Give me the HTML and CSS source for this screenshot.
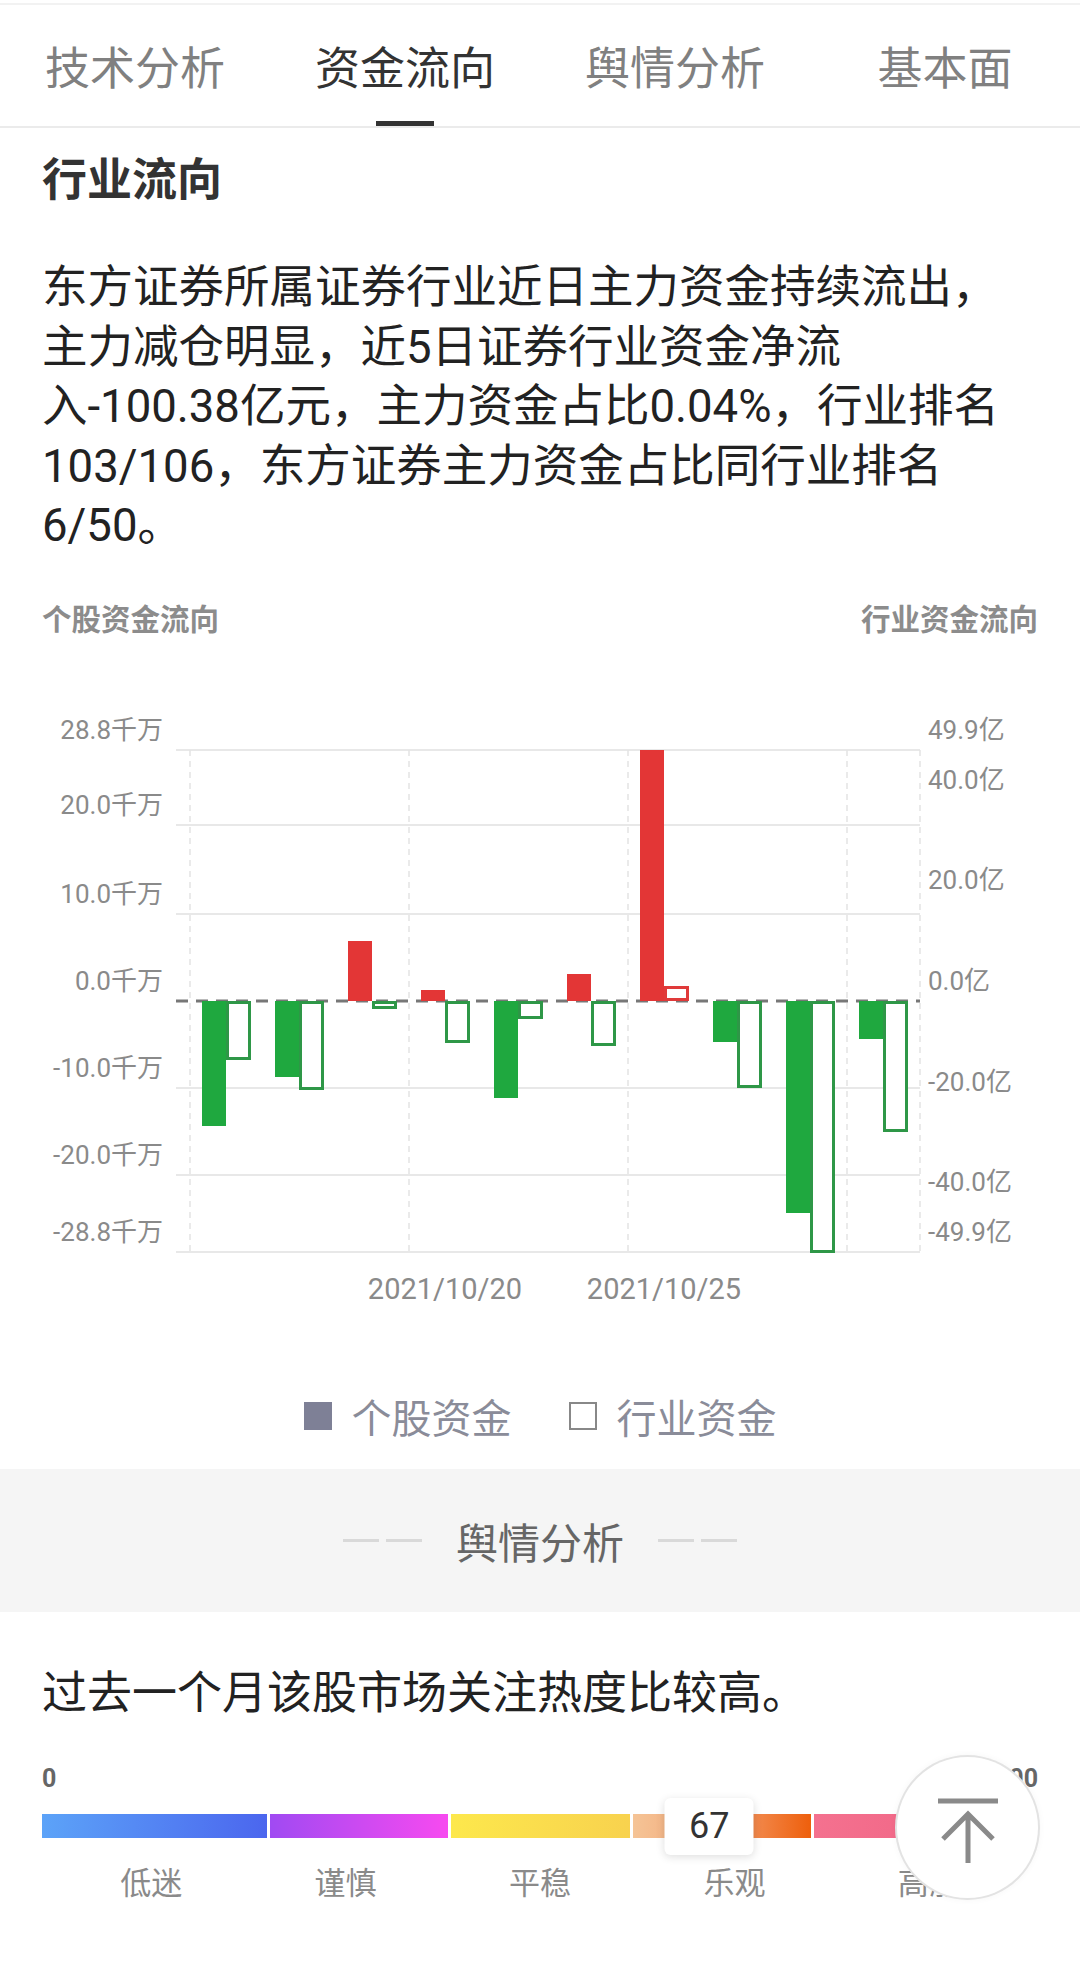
FILE: index.html
```html
<!DOCTYPE html>
<html lang="zh-CN">

<head>
    <meta charset="UTF-8">
    <meta name="viewport" content="width=device-width, initial-scale=1.0">
    <title>资金流向</title>
    <link rel="stylesheet" href="styles.css">
</head>

<body>
    <nav class="tabs">
        <div class="tab">技术分析</div>
        <div class="tab active">资金流向</div>
        <div class="tab">舆情分析</div>
        <div class="tab">基本面</div>
    </nav>

    <section class="industry">
        <h2>行业流向</h2>
        <p class="summary">东方证券所属证券行业近日主力资金持续流出，主力减仓明显，近5日证券行业资金净流入-100.38亿元，主力资金占比0.04%，行业排名103/106，东方证券主力资金占比同行业排名6/50。</p>
        <div class="flow-labels">
            <span>个股资金流向</span>
            <span>行业资金流向</span>
        </div>
    </section>

    <div class="chart">
        <svg width="1080" height="680" viewBox="0 0 1080 680">
            <!-- grid -->
            <g class="grid">
                <line x1="176" y1="110" x2="920" y2="110" />
                <line x1="176" y1="185" x2="920" y2="185" />
                <line x1="176" y1="274" x2="920" y2="274" />
                <line x1="176" y1="448" x2="920" y2="448" />
                <line x1="176" y1="535" x2="920" y2="535" />
                <line x1="176" y1="612" x2="920" y2="612" />
                <line class="v" x1="190" y1="110" x2="190" y2="612" />
                <line class="v" x1="409" y1="110" x2="409" y2="612" />
                <line class="v" x1="628" y1="110" x2="628" y2="612" />
                <line class="v" x1="847" y1="110" x2="847" y2="612" />
                <line class="v" x1="920" y1="110" x2="920" y2="612" />
            </g>
            <line class="zero" x1="176" y1="361" x2="920" y2="361" />

            <!-- stock (filled) and industry (hollow) bars -->
            <rect class="bar-down" x="202" y="361" width="24" height="125" />
            <rect class="box-down" x="227.5" y="362.5" width="22" height="56" />

            <rect class="bar-down" x="275" y="361" width="24" height="76" />
            <rect class="box-down" x="300.5" y="362.5" width="22" height="86" />

            <rect class="bar-up" x="348" y="301" width="24" height="60" />
            <rect class="box-down" x="373.5" y="362.5" width="22" height="5" />

            <rect class="bar-up" x="421" y="350" width="24" height="11" />
            <rect class="box-down" x="446.5" y="362.5" width="22" height="39" />

            <rect class="bar-down" x="494" y="361" width="24" height="97" />
            <rect class="box-down" x="519.5" y="362.5" width="22" height="15" />

            <rect class="bar-up" x="567" y="334" width="24" height="27" />
            <rect class="box-down" x="592.5" y="362.5" width="22" height="42" />

            <rect class="bar-up" x="640" y="110" width="24" height="251" />
            <rect class="box-up" x="665.5" y="347.5" width="22" height="12" />

            <rect class="bar-down" x="713" y="361" width="24" height="41" />
            <rect class="box-down" x="738.5" y="362.5" width="22" height="84" />

            <rect class="bar-down" x="786" y="361" width="24" height="212" />
            <rect class="box-down" x="811.5" y="362.5" width="22" height="249" />

            <rect class="bar-down" x="859" y="361" width="24" height="38" />
            <rect class="box-down" x="884.5" y="362.5" width="22" height="128" />

            <!-- axis labels -->
            <g class="axis-l">
                <text x="163" y="99">28.8千万</text>
                <text x="163" y="174">20.0千万</text>
                <text x="163" y="263">10.0千万</text>
                <text x="163" y="350">0.0千万</text>
                <text x="163" y="437">-10.0千万</text>
                <text x="163" y="524">-20.0千万</text>
                <text x="163" y="601">-28.8千万</text>
            </g>
            <g class="axis-r">
                <text x="928" y="99">49.9亿</text>
                <text x="928" y="149">40.0亿</text>
                <text x="928" y="249">20.0亿</text>
                <text x="928" y="350">0.0亿</text>
                <text x="928" y="451">-20.0亿</text>
                <text x="928" y="551">-40.0亿</text>
                <text x="928" y="601">-49.9亿</text>
            </g>
            <g class="axis-x">
                <text x="445" y="659">2021/10/20</text>
                <text x="664" y="659">2021/10/25</text>
            </g>
        </svg>
    </div>

    <div class="legend">
        <div class="legend-item"><span class="swatch"></span>个股资金</div>
        <div class="legend-item"><span class="swatch hollow"></span>行业资金</div>
    </div>

    <div class="sentiment-head">
        <span class="dash"></span>
        <span>舆情分析</span>
        <span class="dash"></span>
    </div>

    <section class="sentiment">
        <p>过去一个月该股市场关注热度比较高。</p>
        <div class="scale-ends">
            <span>0</span>
            <span>100</span>
        </div>
        <div class="heat">
            <div class="heat-bar">
                <span class="seg seg-1"></span>
                <span class="seg seg-2"></span>
                <span class="seg seg-3"></span>
                <span class="seg seg-4"></span>
                <span class="seg seg-5"></span>
            </div>
            <div class="heat-mark" style="left: 67%;">67</div>
        </div>
        <div class="heat-labels">
            <span>低迷</span>
            <span>谨慎</span>
            <span>平稳</span>
            <span>乐观</span>
            <span>高涨</span>
        </div>
    </section>

    <div class="to-top">
        <svg width="141" height="141" viewBox="0 0 141 141">
            <line x1="41" y1="44" x2="101" y2="44" />
            <path d="M71 58 V106 M46 82 L71 57 L96 82" />
        </svg>
    </div>
</body>

</html>
```

FILE: styles.css
```css
body {
    margin: 0;
    background-color: #fff;
    color: #222;
    font-family: Roboto, "Noto Sans CJK SC", sans-serif;
}

/* tabs */
.tabs {
    display: flex;
    height: 121px;
    margin-top: 3px;
    border-top: 2px solid #f2f2f2;
    border-bottom: 2px solid #ebebeb;
}

.tab {
    flex: 1;
    position: relative;
    display: flex;
    align-items: center;
    justify-content: center;
    font-size: 45px;
    color: #808080;
}

.tab.active {
    color: #333;
}

.tab.active::after {
    content: '';
    position: absolute;
    bottom: 0;
    left: 50%;
    width: 58px;
    height: 5px;
    margin-left: -29px;
    background-color: #333;
}

/* industry flow */
.industry {
    padding: 0 42px;
}

.industry h2 {
    margin: 22px 0 0;
    font-size: 45px;
    line-height: 62px;
    font-weight: 700;
    color: #333;
}

.summary {
    max-width: 985px;
    margin: 46px 0 0;
    font-size: 45.5px;
    line-height: 59.5px;
    color: #222;
}

.flow-labels {
    display: flex;
    justify-content: space-between;
    margin-top: 44px;
    font-size: 29.5px;
    line-height: 40px;
    font-weight: 700;
    color: #8c8c8c;
}

.chart svg {
    display: block;
}

.grid line {
    stroke: #e8e8e8;
    stroke-width: 2;
}

.grid .v {
    stroke: #e4e4e4;
    stroke-width: 1.5;
    stroke-dasharray: 6 5;
}

.zero {
    stroke: #777;
    stroke-width: 3;
    stroke-dasharray: 12 8;
}

.bar-up {
    fill: #e33636;
}

.bar-down {
    fill: #1fa83f;
}

.box-up,
.box-down {
    fill: #fff;
    stroke-width: 3;
}

.box-up {
    stroke: #e03a3a;
}

.box-down {
    stroke: #2e9747;
}

.axis-l,
.axis-r {
    font-size: 26px;
    fill: #8a8a8a;
}

.axis-l {
    text-anchor: end;
}

.axis-x {
    font-size: 29px;
    fill: #8a8a8a;
    text-anchor: middle;
}

/* legend */
.legend {
    display: flex;
    justify-content: center;
    align-items: center;
    gap: 57px;
    height: 56px;
    margin-top: 68px;
    font-size: 40px;
    color: #8a8c99;
}

.legend-item {
    display: flex;
    align-items: center;
    gap: 20px;
}

.swatch {
    width: 28px;
    height: 28px;
    background-color: #7e8096;
}

.swatch.hollow {
    box-sizing: border-box;
    background-color: #fff;
    border: 2px solid #888;
}

/* sentiment */
.sentiment-head {
    display: flex;
    justify-content: center;
    align-items: center;
    gap: 34px;
    height: 143px;
    margin-top: 25px;
    background-color: #f5f5f5;
    font-size: 42px;
    color: #666;
}

.dash {
    width: 79px;
    height: 3px;
    background: linear-gradient(to right, #d9d9d9 36px, transparent 36px, transparent 43px, #d9d9d9 43px);
}

.sentiment {
    padding: 0 42px;
}

.sentiment p {
    margin: 52px 0 0;
    font-size: 45px;
    line-height: 60px;
    color: #222;
}

.scale-ends {
    display: flex;
    justify-content: space-between;
    margin-top: 38px;
    font-size: 25px;
    line-height: 34px;
    font-weight: 700;
    color: #666;
}

.heat {
    position: relative;
    margin-top: 18px;
}

.heat-bar {
    display: flex;
    gap: 3px;
    height: 24px;
}

.seg-1 {
    flex: 225;
    background: linear-gradient(to right, #5ca3f8, #4b66ee);
}

.seg-2 {
    flex: 178;
    background: linear-gradient(to right, #a04af2, #f74af0);
}

.seg-3 {
    flex: 179;
    background: linear-gradient(to right, #fde84c, #f8d24e);
}

.seg-4 {
    flex: 178;
    background: linear-gradient(to right, #f5c496, #f4a070 50%, #ee5f0c);
}

.seg-5 {
    flex: 224;
    background: linear-gradient(to right, #f4718f, #ef5f80);
}

.heat-mark {
    position: absolute;
    top: -16px;
    transform: translateX(-50%);
    display: flex;
    align-items: center;
    justify-content: center;
    width: 89px;
    height: 57px;
    background-color: #fff;
    border-radius: 6px;
    box-shadow: 0 2px 8px rgba(0, 0, 0, 0.13);
    font-size: 36px;
    color: #333;
}

.heat-labels {
    display: grid;
    grid-template-columns: repeat(5, 1fr);
    padding: 0 12px;
    margin-top: 24px;
    font-size: 31px;
    line-height: 44px;
    text-align: center;
    color: #8a8a8a;
}

/* back to top */
.to-top {
    position: fixed;
    right: 42px;
    bottom: 63px;
    width: 141px;
    height: 141px;
    border-radius: 50%;
    background-color: #fff;
    box-shadow: 0 0 0 2px #e3e3e3, 0 0 8px rgba(0, 0, 0, 0.06);
}

.to-top svg {
    display: block;
}

.to-top line,
.to-top path {
    fill: none;
    stroke: #8a8a8a;
    stroke-width: 5;
}
```
